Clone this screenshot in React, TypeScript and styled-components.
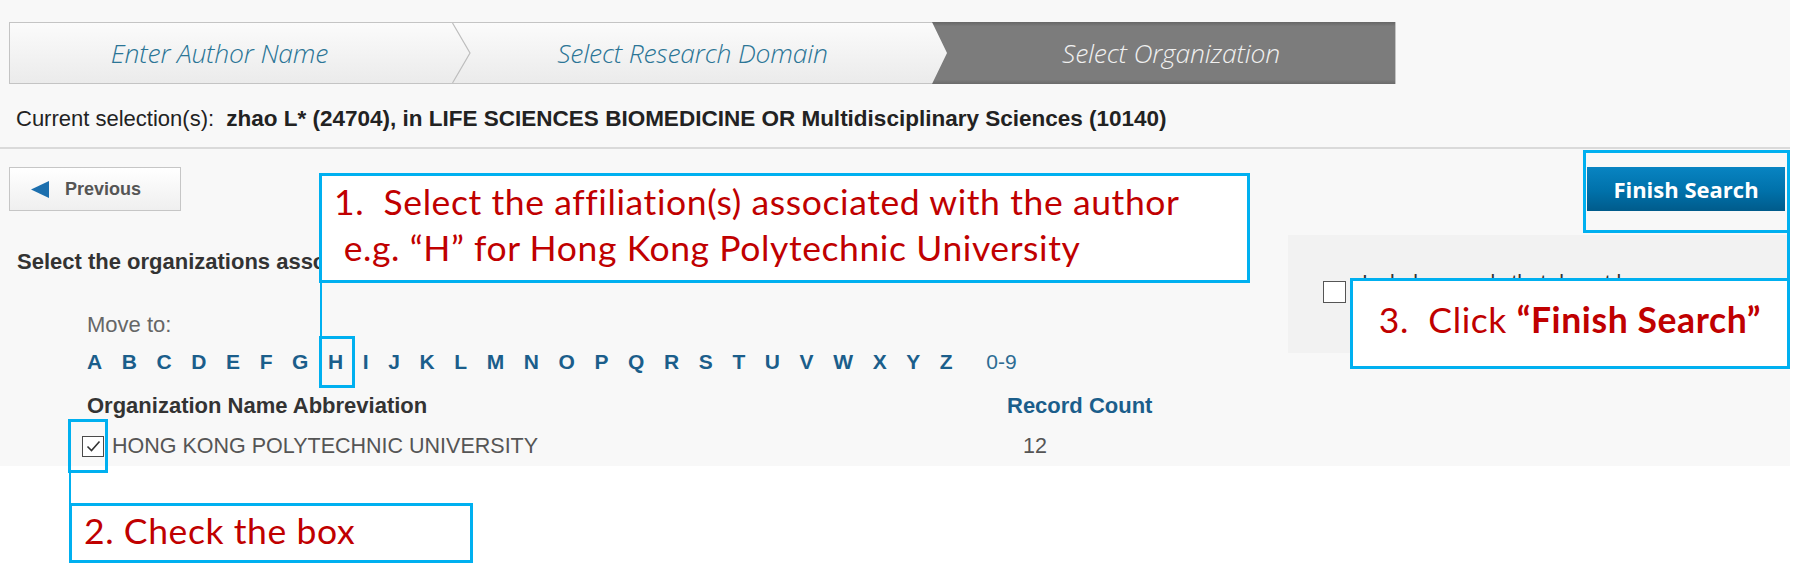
import React from 'react';
import styled, { createGlobalStyle, css } from 'styled-components';

const GlobalStyle = createGlobalStyle`
    html, body {
        margin: 0;
        padding: 0;
        background: #ffffff;
    }
    body {
        font-family: "Liberation Sans", Arial, sans-serif;
    }
`;

const Screen = styled.div`
    position: relative;
    width: 1807px;
    height: 578px;
    background: #ffffff;
`;

const Page = styled.div`
    width: 1790px;
    height: 466px;
    background: #f8f8f8;
`;

const Header = styled.div`
    padding: 22px 0 16px;
    border-bottom: 2px solid #dadada;
`;

const Steps = styled.div`
    display: flex;
    margin-left: 9px;
    width: 1387px;
    height: 62px;
    box-sizing: border-box;
    border: 1px solid #c4c4c4;
    background: linear-gradient(#fbfbfb, #ebebeb);
`;

const Step = styled.div<{ $w?: number; $active?: boolean; $shift?: number }>`
    position: relative;
    box-sizing: border-box;
    flex: ${p => (p.$w ? `0 0 ${p.$w}px` : '1 1 auto')};
    display: flex;
    align-items: center;
    justify-content: center;
    padding-right: ${p => p.$shift ?? 0}px;
    font-family: "Open Sans", "Liberation Sans", sans-serif;
    font-weight: 300;
    font-style: italic;
    font-size: 26.5px;
    letter-spacing: -0.2px;
    color: ${p => (p.$active ? '#f0f0f0' : '#2b7596')};
    ${p => p.$active && css`
        margin: -1px 0;
        background: linear-gradient(#666666, #7c7c7c 7%, #7c7c7c 93%, #6a6a6a);
        clip-path: polygon(0 0, 100% 0, 100% 100%, 0 100%, 15px 50%);
        padding-left: 15px;
    `}
`;

const StepDivider = styled.svg`
    position: absolute;
    top: 0;
    right: -18px;
    width: 19px;
    height: 100%;
`;

const Selection = styled.div`
    margin: 22px 0 0 16px;
    font-size: 22px;
    line-height: 25px;
    color: #222222;

    b {
        font-size: 22.5px;
        font-weight: bold;
    }
`;

const Body = styled.div`
    display: flex;
`;

const Main = styled.div`
    flex: 1 1 auto;
    padding: 18px 0 0 9px;
`;

const Side = styled.div`
    flex: 0 0 502px;
    display: flex;
    flex-direction: column;
    align-items: flex-end;
    padding-top: 18px;
`;

const PrevButton = styled.button`
    display: flex;
    align-items: center;
    gap: 16px;
    box-sizing: border-box;
    width: 172px;
    height: 44px;
    padding: 0 0 0 21px;
    border: 1px solid #c6c6c6;
    background: linear-gradient(#ffffff, #efefef);
    font-family: "Liberation Sans", Arial, sans-serif;
    font-size: 18px;
    font-weight: bold;
    color: #555555;
`;

const Heading = styled.div`
    margin: 39px 0 0 8px;
    font-size: 22px;
    line-height: 24px;
    font-weight: bold;
    color: #333333;
    white-space: nowrap;
`;

const Directory = styled.div`
    padding-left: 78px;
`;

const MoveTo = styled.div`
    margin-top: 39px;
    font-size: 22px;
    line-height: 24px;
    color: #666666;
`;

const Letters = styled.div`
    display: flex;
    gap: 19.6px;
    margin-top: 13px;
    font-size: 21px;
    line-height: 24px;
`;

const Letter = styled.a<{ $plain?: boolean }>`
    color: #1b5e8b;
    font-weight: bold;
    text-decoration: none;
    ${p => p.$plain && css`
        margin-left: 14px;
        font-weight: normal;
        color: #2d6c93;
    `}
`;

const Table = styled.div`
    display: grid;
    grid-template-columns: 920px auto;
    margin-top: 20px;
`;

const HeadCell = styled.div<{ $blue?: boolean }>`
    font-size: 22px;
    line-height: 24px;
    font-weight: bold;
    color: ${p => (p.$blue ? '#1b5e8b' : '#333333')};
`;

const Cell = styled.div<{ $num?: boolean }>`
    display: flex;
    align-items: center;
    margin-top: 16px;
    font-size: 21.5px;
    line-height: 24px;
    color: #555555;
    ${p => p.$num && css`
        padding-left: 16px;
    `}
`;

const Box = styled.span<{ $size: number; $gap?: number }>`
    display: inline-flex;
    align-items: center;
    justify-content: center;
    box-sizing: border-box;
    width: ${p => p.$size}px;
    height: ${p => p.$size - 1}px;
    margin: 0 ${p => p.$gap ?? 0}px 0 -5px;
    border: 1.5px solid #4a4a4a;
    background: #ffffff;
    flex: 0 0 auto;
`;

const FinishButton = styled.button`
    box-sizing: border-box;
    width: 198px;
    height: 44px;
    margin-right: 5px;
    padding: 0;
    border: 0;
    background: linear-gradient(#0884c2, #0071aa 55%, #005b8b);
    font-family: "Open Sans", "Liberation Sans", sans-serif;
    font-size: 22px;
    font-weight: 700;
    color: #ffffff;
`;

const OptionPanel = styled.div`
    align-self: stretch;
    display: flex;
    align-items: flex-start;
    gap: 16px;
    height: 118px;
    margin-top: 24px;
    padding: 35px 0 0 35px;
    box-sizing: border-box;
    background: #f2f2f2;
    overflow: hidden;
`;

const OptionBox = styled(Box)`
    margin: 11px 0 0 0;
    border-color: #555555;
`;

const OptionLabel = styled.div`
    width: 400px;
    font-size: 21px;
    line-height: 24px;
    color: #333333;
`;

/* annotation layer, drawn over the page */

const Callout = styled.div<{ $x: number; $y: number; $w: number; $h: number; $pad: number; $center?: boolean }>`
    position: absolute;
    left: ${p => p.$x}px;
    top: ${p => p.$y}px;
    width: ${p => p.$w}px;
    height: ${p => p.$h}px;
    box-sizing: border-box;
    padding: ${p => p.$pad}px 0 0 ${p => (p.$center ? 0 : 12)}px;
    border: 3px solid #00b0f0;
    background: #ffffff;
    font-family: Lato, "Open Sans", sans-serif;
    font-size: 35.5px;
    letter-spacing: 0.6px;
    line-height: 46px;
    color: #c00000;
    white-space: nowrap;
    text-align: ${p => (p.$center ? 'center' : 'left')};

    b {
        font-weight: bold;
    }
`;

const Highlight = styled.div<{ $x: number; $y: number; $w: number; $h: number }>`
    position: absolute;
    left: ${p => p.$x}px;
    top: ${p => p.$y}px;
    width: ${p => p.$w}px;
    height: ${p => p.$h}px;
    box-sizing: border-box;
    border: 3px solid #00b0f0;
`;

const Connector = styled.div<{ $x: number; $y: number; $h: number; $w?: number }>`
    position: absolute;
    left: ${p => p.$x}px;
    top: ${p => p.$y}px;
    width: ${p => p.$w ?? 2}px;
    height: ${p => p.$h}px;
    background: #00b0f0;
`;

const letters = 'ABCDEFGHIJKLMNOPQRSTUVWXYZ'.split('');

const Check = () => (
    <svg width="15" height="13" viewBox="0 0 15 13">
        <polyline points="1.5,6.5 5.5,10.5 13.5,1.5" fill="none" stroke="#333" strokeWidth="1.6" />
    </svg>
);

export default function App() {
    return (
        <>
            <GlobalStyle />
            <Screen>
                <Page>
                    <Header>
                        <Steps>
                            <Step $w={443} $shift={24}>
                                Enter Author Name
                                <StepDivider viewBox="0 0 19 60" preserveAspectRatio="none">
                                    <polyline points="0.5,0 18,30 0.5,60" fill="none" stroke="#bdbdbd" strokeWidth="1.2" />
                                </StepDivider>
                            </Step>
                            <Step $w={479}>Select Research Domain</Step>
                            <Step $active>Select Organization</Step>
                        </Steps>
                        <Selection>
                            Current selection(s):&nbsp;&nbsp;
                            <b>zhao L* (24704), in LIFE SCIENCES BIOMEDICINE OR Multidisciplinary Sciences (10140)</b>
                        </Selection>
                    </Header>
                    <Body>
                        <Main>
                            <PrevButton>
                                <svg width="18" height="17" viewBox="0 0 18 17">
                                    <polygon points="0,8.5 18,0 18,17" fill="#1c6fae" />
                                </svg>
                                Previous
                            </PrevButton>
                            <Heading>Select the organizations associated with this author</Heading>
                            <Directory>
                                <MoveTo>Move to:</MoveTo>
                                <Letters>
                                    {letters.map(l => (
                                        <Letter key={l} href="#">{l}</Letter>
                                    ))}
                                    <Letter $plain href="#">0-9</Letter>
                                </Letters>
                                <Table>
                                    <HeadCell>Organization Name Abbreviation</HeadCell>
                                    <HeadCell $blue>Record Count</HeadCell>
                                    <Cell>
                                        <Box $size={22} $gap={8}><Check /></Box>
                                        HONG KONG POLYTECHNIC UNIVERSITY
                                    </Cell>
                                    <Cell $num>12</Cell>
                                </Table>
                            </Directory>
                        </Main>
                        <Side>
                            <FinishButton>Finish Search</FinishButton>
                            <OptionPanel>
                                <OptionBox $size={23} />
                                <OptionLabel>Include records that do not have organization information</OptionLabel>
                            </OptionPanel>
                        </Side>
                    </Body>
                </Page>

                <Callout $x={319} $y={173} $w={931} $h={110} $pad={3}>
                    1.&nbsp;&nbsp;Select the affiliation(s) associated with the author
                    <br />
                    &nbsp;e.g. “H” for Hong Kong Polytechnic University
                </Callout>
                <Connector $x={320} $y={283} $h={53} />
                <Highlight $x={319} $y={336} $w={36} $h={52} />

                <Highlight $x={68} $y={419} $w={40} $h={54} />
                <Connector $x={69} $y={473} $h={30} />
                <Callout $x={69} $y={503} $w={404} $h={60} $pad={2}>
                    2. Check the box
                </Callout>

                <Highlight $x={1583} $y={150} $w={207} $h={83} />
                <Connector $x={1787} $y={233} $h={45} $w={3} />
                <Callout $x={1350} $y={278} $w={440} $h={91} $pad={16} $center>
                    3.&nbsp;&nbsp;Click <b>“Finish Search”</b>
                </Callout>
            </Screen>
        </>
    );
}
